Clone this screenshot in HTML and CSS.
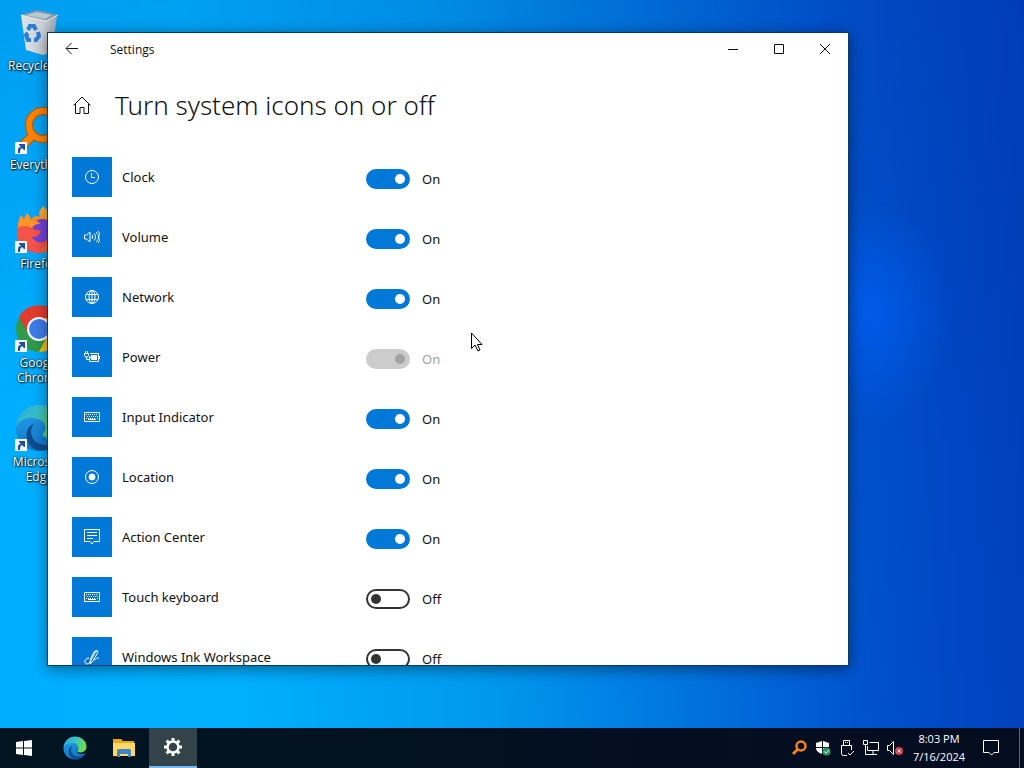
FILE: index.html
```html
<!DOCTYPE html>
<html lang="en">
<head>
  <meta charset="UTF-8">
  <title>Settings</title>
  <link rel="stylesheet" href="styles.css">
</head>
<body>
  <!-- shared symbols -->
  <svg class="defs" aria-hidden="true">
    <defs>
      <linearGradient id="edgeTop" x1="0" y1="0" x2="1" y2="0.4">
        <stop offset="0" stop-color="#2ba8e0"/>
        <stop offset="0.5" stop-color="#36c2c8"/>
        <stop offset="1" stop-color="#6bdc52"/>
      </linearGradient>
      <linearGradient id="edgeLeft" x1="0" y1="0" x2="0.3" y2="1">
        <stop offset="0" stop-color="#1f9be6"/>
        <stop offset="1" stop-color="#1573c6"/>
      </linearGradient>
      <linearGradient id="bin" x1="0" y1="0" x2="1" y2="0">
        <stop offset="0" stop-color="#dfe4e8"/>
        <stop offset="0.6" stop-color="#c9d0d6"/>
        <stop offset="1" stop-color="#9aa7b2"/>
      </linearGradient>
      <linearGradient id="fox" x1="1" y1="0" x2="0" y2="1">
        <stop offset="0" stop-color="#ffe14a"/>
        <stop offset="0.45" stop-color="#ff8a26"/>
        <stop offset="1" stop-color="#f0266b"/>
      </linearGradient>
    </defs>
    <symbol id="edge" viewBox="0 0 48 48">
      <path d="M1 23C3 15 10 11 19 13c9 2 13 7 12 11-2 4-5 6-3 8 3 5 12 5 17 2-4 8-12 13-21 13C11 47 0 37 1 23z" fill="url(#edgeLeft)"/>
      <path d="M1 23C2 10 12 1 24 1c13 0 23 9 23 20 0 8-6 12-13 12-5 0-7-2-5-4 4-5 1-14-10-15C11 13 4 17 1 23z" fill="url(#edgeTop)"/>
      <path d="M20 19c-6 5-5 14 1 19 7 5 17 4 24-3-6 12-19 14-27 9-9-6-9-21 2-25z" fill="#0d4c8e"/>
    </symbol>
    <symbol id="shortcut" viewBox="0 0 12 12">
      <path d="M0 0h12v12H0z" fill="#f5f6f8"/>
      <path d="M3 11V8c0-2 1-3 3-3L4 3V2h6v6H9L7 6C5 7 5 9 5 11z" fill="#1f4fa0"/>
    </symbol>
    <symbol id="keyboard" viewBox="0 0 16 16">
      <path d="M.5 3.500h15v9H.5z" fill="none" stroke="currentColor"/>
      <path d="M2 5.500h12M3 7.500h11M2 9.500h1m1 0h8m1 0h1" fill="none" stroke="currentColor" stroke-dasharray="1 1"/>
      <path d="M4 10.500h8" stroke="currentColor"/>
    </symbol>
  </svg>

  <main class="desktop">
    <ul class="shortcuts">
      <li>
        <svg viewBox="0 0 48 48">
          <path d="M6 7l36 1-5 36-9 3-17-5z" fill="url(#bin)"/>
          <path d="M6 7l16-5 21 5-12 6z" fill="#8297a5"/>
          <path d="M10 7l12-3 15 3-7 4z" fill="#b9c8d0"/>
          <path d="M6 7l25 6 12-6" fill="none" stroke="#e6ebee"/>
          <g fill="none" stroke="#2a7fd4" stroke-width="4">
            <path d="M13 22l2-4h4l2 4"/>
            <path d="M23 24l1 4-3 4h-2"/>
            <path d="M16 32h-3l-2-5 2-2"/>
          </g>
        </svg>
        <span>Recycle Bin</span>
      </li>
      <li>
        <svg viewBox="0 0 48 48">
          <circle cx="28" cy="18" r="14" fill="none" stroke="#b85a00" stroke-width="8"/>
          <path d="M18 28L5 41" stroke="#b85a00" stroke-width="9"/>
          <circle cx="28" cy="18" r="14" fill="none" stroke="#ff8200" stroke-width="6"/>
          <path d="M18 28L5 41" stroke="#ff8200" stroke-width="7"/>
          <use href="#shortcut" x="0" y="35" width="12" height="12"/>
        </svg>
        <span>Everything</span>
      </li>
      <li>
        <svg viewBox="0 0 48 48">
          <path d="M25 11c-2-5 0-8 4-11 1 6 17 10 17 25 0 13-10 22-22 22S2 38 2 26c0-7 2-11 4-15l2 3 4-6 4 5c3-3 6-4 9-2z" fill="url(#fox)"/>
          <circle cx="27" cy="25" r="12" fill="#7442d8"/>
          <path d="M2 25c0-5 2-9 6-11 5-2 11-1 16 4-4 0-7 1-6 4 1 3 5 1 8 3-2 6-7 7-12 5 3 8 13 9 20 2-3 12-14 15-22 11C5 39 1 32 2 25z" fill="#f4534a"/>
          <path d="M3 22c0-5 1-9 3-13l3 4 3-6c2 2 3 4 4 7 4 0 8 1 9 4-5 0-7 2-8 4-4-2-9-3-14 0z" fill="#ff9526"/>
          <use href="#shortcut" x="0" y="35" width="12" height="12"/>
        </svg>
        <span>Firefox</span>
      </li>
      <li>
        <svg viewBox="0 0 48 48">
          <circle cx="24" cy="24" r="23" fill="#2f9b4b"/>
          <path d="M4 12A23 23 0 0 1 44 12L46 16H24L13 28z" fill="#e33b2e"/>
          <path d="M44 13A23 23 0 0 1 24 47L35 26 30 13z" fill="#fbc116"/>
          <circle cx="24" cy="24" r="12" fill="#fff"/>
          <circle cx="24" cy="24" r="10" fill="#3f7de8"/>
          <use href="#shortcut" x="0" y="35" width="12" height="12"/>
        </svg>
        <span>Google Chrome</span>
      </li>
      <li>
        <svg viewBox="0 0 48 48">
          <use href="#edge" width="48" height="48"/>
          <use href="#shortcut" x="0" y="35" width="12" height="12"/>
        </svg>
        <span>Microsoft Edge</span>
      </li>
    </ul>

    <section class="window">
      <header class="titlebar">
        <button class="back" aria-label="Back">
          <svg viewBox="0 0 16 16"><path d="M14 7.500H2.500M7.500 2L2 7.500 7.500 13"/></svg>
        </button>
        <span class="title">Settings</span>
        <button aria-label="Minimize">
          <svg viewBox="0 0 16 16"><path d="M3 8.500h10"/></svg>
        </button>
        <button aria-label="Maximize">
          <svg viewBox="0 0 16 16"><path d="M3.500 3.500h9v9h-9z"/></svg>
        </button>
        <button aria-label="Close">
          <svg viewBox="0 0 16 16"><path d="M3 3l10 10M13 3L3 13"/></svg>
        </button>
      </header>

      <div class="heading">
        <a href="#" aria-label="Home">
          <svg viewBox="0 0 20 20"><path d="M1.500 10.500L10 2l8.500 8.500M3.500 9v9.500H8v-6h4v6h4.500V9"/></svg>
        </a>
        <h1>Turn system icons on or off</h1>
      </div>

      <ul class="settings">
        <li>
          <span class="tile"><svg viewBox="0 0 16 16"><circle cx="8" cy="8" r="6.500"/><path d="M7.500 4v4.500H11"/></svg></span>
          <label for="clock">Clock</label>
          <span class="switch"><input type="checkbox" id="clock" checked><span>On</span></span>
        </li>
        <li>
          <span class="tile"><svg viewBox="0 0 16 16"><path d="M.5 6v4h2L6 13V3L2.500 6zM8 6c1 1 1 3 0 4M10 4.500c2 2 2 5 0 7M12 3c3.500 3 3.500 7 0 10M14 2c3 4 3 8 0 12"/></svg></span>
          <label for="volume">Volume</label>
          <span class="switch"><input type="checkbox" id="volume" checked><span>On</span></span>
        </li>
        <li>
          <span class="tile"><svg viewBox="0 0 16 16"><circle cx="8" cy="8" r="6.500"/><ellipse cx="8" cy="8" rx="3" ry="6.500"/><path d="M8 1.500v13M2 5.500h12M2 10.500h12"/></svg></span>
          <label for="network">Network</label>
          <span class="switch"><input type="checkbox" id="network" checked><span>On</span></span>
        </li>
        <li>
          <span class="tile"><svg viewBox="0 0 16 16"><path d="M1.500 2v2M3.500 2v2M.5 4.500h4v2L3.500 8h-2L.5 6.500zM2.500 8v2.500H5M6 4.500h8.500v8h-9V8M15.500 7v3"/><path d="M7 6h6v5H7V9H5V7.500h2z" fill="currentColor" stroke="none"/></svg></span>
          <label for="power">Power</label>
          <span class="switch"><input type="checkbox" id="power" checked disabled><span>On</span></span>
        </li>
        <li>
          <span class="tile"><svg><use href="#keyboard"/></svg></span>
          <label for="input">Input Indicator</label>
          <span class="switch"><input type="checkbox" id="input" checked><span>On</span></span>
        </li>
        <li>
          <span class="tile"><svg viewBox="0 0 16 16"><circle cx="8" cy="8" r="6.500"/><circle cx="8" cy="8" r="3" fill="currentColor"/></svg></span>
          <label for="location">Location</label>
          <span class="switch"><input type="checkbox" id="location" checked><span>On</span></span>
        </li>
        <li>
          <span class="tile"><svg viewBox="0 0 16 16"><path d="M.5.500h15v12H10l-2 2.500-2-2.500H.5zM3 3.500h10M3 6.500h10M3 9.500h6"/></svg></span>
          <label for="action">Action Center</label>
          <span class="switch"><input type="checkbox" id="action" checked><span>On</span></span>
        </li>
        <li>
          <span class="tile"><svg><use href="#keyboard"/></svg></span>
          <label for="touch">Touch keyboard</label>
          <span class="switch"><input type="checkbox" id="touch"><span>Off</span></span>
        </li>
        <li>
          <span class="tile"><svg viewBox="0 0 16 16"><path d="M6 15l1-4 5-9q2-1 2 1l-5 9zM6 11l4-8q1-2 3-1M5 9c-4 0-6 5-2 6 2 0 3-1 3-3M11 10c-1 2 1 0 2-1s0 1 2 0"/></svg></span>
          <label for="ink">Windows Ink Workspace</label>
          <span class="switch"><input type="checkbox" id="ink"><span>Off</span></span>
        </li>
      </ul>

      <svg class="cursor" viewBox="0 0 12 20"><path d="M.5 1v15.500L4 13l3 6 2-1-2.500-5.500H11z"/></svg>
    </section>
  </main>

  <footer class="taskbar">
    <nav class="apps">
      <button class="start" aria-label="Start">
        <svg viewBox="0 0 16 16" width="16" height="16" fill="#fff"><path d="M0 2l7-1v6.500H0zM8 1l8-1v7.500H8zM0 8.500h7V15l-7-1zM8 8.500h8V16l-8-1z"/></svg>
      </button>
      <button aria-label="Microsoft Edge">
        <svg width="24" height="24"><use href="#edge"/></svg>
      </button>
      <button aria-label="File Explorer">
        <svg viewBox="0 0 24 24" width="24" height="24">
          <path d="M1 3h8l2 2h11v5H1z" fill="#e9a820"/>
          <path d="M1 7h22v13H1z" fill="#ffd966"/>
          <path d="M5 21v-6q0-2 2-2h10q2 0 2 2v6h-3v-3H8v3z" fill="#3f86c8"/>
        </svg>
      </button>
      <button class="active" aria-label="Settings">
        <svg viewBox="0 0 20 20" width="20" height="20" fill="none" stroke="#fff">
          <circle cx="10" cy="10" r="5.500" stroke-width="2.500"/>
          <path d="M10 1v3M10 16v3M1 10h3M16 10h3M3.600 3.600l2.200 2.200M14.200 14.200l2.200 2.200M16.400 3.600l-2.200 2.200M5.800 14.200l-2.200 2.200" stroke-width="3"/>
        </svg>
      </button>
    </nav>

    <div class="tray">
      <button aria-label="Everything">
        <svg viewBox="0 0 16 16"><circle cx="10" cy="6" r="4.500" fill="none" stroke="#f58220" stroke-width="2.500"/><path d="M7 9l-5 5" stroke="#f58220" stroke-width="3"/></svg>
      </button>
      <button aria-label="Windows Security">
        <svg viewBox="0 0 16 16"><path d="M7 1L1 3v4h6zM8 1l6 2v4H8zM1 8h6v6C4 13 1 11 1 8zM8 8h6c0 3-3 5-6 6z" fill="#fff"/><circle cx="11.500" cy="11.500" r="4" fill="#309a67"/><path d="M9.500 11.500l1.500 1.500 3-3" fill="none" stroke="#fff"/></svg>
      </button>
      <button aria-label="Safely remove hardware">
        <svg class="line" viewBox="0 0 16 16"><path d="M4.500 5.500v-5h6v5M6 2.500h1M8 2.500h1M8 15.500H4.500q-2 0-2-2v-8h10V10M9 13l2 2 4-4"/></svg>
      </button>
      <button aria-label="Network">
        <svg class="line" viewBox="0 0 16 16"><path d="M6.500 2.500h9v8h-11V6M6 14.500h8M10 11v3M.5.500h4v4h-4zM2.500 5v9.500H6"/></svg>
      </button>
      <button aria-label="Volume muted">
        <svg class="line" viewBox="0 0 16 16"><path d="M.5 5.500v5h2l4 4V1.500l-4 4z"/><circle cx="12" cy="11" r="4" fill="#d9414e" stroke="none"/><path d="M10.500 9.500l3 3M13.500 9.500l-3 3"/></svg>
      </button>
      <button class="clock"><span>8:03 PM</span><span>7/16/2024</span></button>
      <button class="notify" aria-label="Notifications">
        <svg class="line" viewBox="0 0 16 16"><path d="M.5.500h15v12H11L8.500 15 6 12.500H.5z"/></svg>
      </button>
      <button class="peek" aria-label="Show desktop"></button>
    </div>
  </footer>

  <script>
    // keep the On / Off text next to each switch in step
    document.querySelectorAll(".switch input").forEach(box => {
      box.addEventListener("change", () => {
        box.nextElementSibling.textContent = box.checked ? "On" : "Off";
      });
    });
  </script>
</body>
</html>
```
FILE: styles.css
```css
* {
  box-sizing: border-box;
}

body {
  margin: 0;
  height: 100vh;
  display: flex;
  flex-direction: column;
  overflow: hidden;
  font-family: "Noto Sans", "Open Sans", sans-serif;
  font-size: 13px;
  color: #111;
}

ul {
  list-style: none;
  margin: 0;
  padding: 0;
}

button {
  display: flex;
  align-items: center;
  justify-content: center;
  padding: 0;
  border: none;
  background: none;
  color: inherit;
  font: inherit;
}

.defs {
  position: absolute;
  width: 0;
  height: 0;
}

/* desktop */
.desktop {
  position: relative;
  flex: 1;
  min-height: 0;
  background:
    radial-gradient(ellipse 80px 110px at 85% 43%, rgba(0, 96, 245, 0.7), rgba(0, 80, 220, 0)),
    linear-gradient(to bottom, rgba(0, 60, 160, 0.14), rgba(0, 60, 160, 0) 60%),
    linear-gradient(86deg, #00aeff 0%, #00b0ff 22%, #0098ee 46%, #0070dc 66%, #0050cc 82%, #003cb8 100%);
}

.shortcuts {
  display: grid;
  grid-auto-rows: 99px;
  width: 76px;
  padding-top: 8px;
}

.shortcuts li {
  display: flex;
  flex-direction: column;
  align-items: center;
  gap: 2px;
  padding: 0 8px;
  color: #fff;
  font-family: "Open Sans", sans-serif;
  font-size: 12px;
  line-height: 15px;
  text-align: center;
  text-shadow: 1px 1px 2px #000, 0 0 2px #000;
}

.shortcuts svg {
  flex: none;
  width: 48px;
  height: 48px;
}

.shortcuts span {
  white-space: nowrap;
}

.shortcuts li:nth-child(n+4) span {
  white-space: normal;
}

/* settings window */
.window {
  position: absolute;
  top: 32px;
  right: 175px;
  bottom: 62px;
  left: 47px;
  overflow: hidden;
  background: #fff;
  border: 1px solid #0c3a66;
  box-shadow: 0 3px 14px rgba(0, 0, 0, 0.45);
}

.titlebar {
  display: flex;
  height: 32px;
}

.titlebar button {
  width: 46px;
}

.titlebar .back {
  width: 48px;
}

.titlebar svg {
  width: 16px;
  height: 16px;
}

.titlebar svg,
.heading svg,
.tile svg {
  fill: none;
  stroke: currentColor;
}

.title {
  flex: 1;
  padding-left: 14px;
  font-family: "Open Sans", sans-serif;
  font-size: 12px;
  line-height: 34px;
}

.heading {
  display: flex;
  align-items: center;
  gap: 23px;
  padding: 20px 24px 0;
}

.heading a {
  display: flex;
  color: #111;
}

.heading svg {
  width: 20px;
  height: 20px;
}

h1 {
  margin: 0;
  font-size: 26px;
  font-weight: 300;
  line-height: 40px;
}

.settings {
  display: grid;
  gap: 20px;
  padding: 32px 24px;
}

.settings li {
  display: grid;
  grid-template-columns: 40px 234px auto;
  column-gap: 10px;
  align-items: center;
}

.tile {
  display: flex;
  align-items: center;
  justify-content: center;
  height: 40px;
  background: #0078d7;
  color: #fff;
}

.tile svg {
  width: 16px;
  height: 16px;
}

.switch {
  display: flex;
  align-items: center;
  gap: 12px;
  padding-top: 4px;
}

.switch input {
  appearance: none;
  display: flex;
  align-items: center;
  width: 44px;
  height: 20px;
  margin: 0;
  padding: 0 3px;
  border: 2px solid #333;
  border-radius: 10px;
}

.switch input::before {
  content: "";
  width: 10px;
  height: 10px;
  border-radius: 50%;
  background: #333;
}

.switch input:checked {
  justify-content: flex-end;
  background: #0078d7;
  border-color: #0078d7;
}

.switch input:checked::before {
  background: #fff;
}

.switch input:disabled {
  background: #ccc;
  border-color: #ccc;
}

.switch input:disabled::before {
  background: #a3a3a3;
}

.switch input:disabled + span {
  color: #a0a0a0;
}

.cursor {
  position: absolute;
  top: 299px;
  left: 423px;
  width: 12px;
  height: 20px;
  fill: #fff;
  stroke: #000;
}

/* taskbar */
.taskbar {
  display: flex;
  justify-content: space-between;
  height: 40px;
  background: linear-gradient(to right, #021521, #040c20);
  color: #fff;
}

.apps {
  display: flex;
  gap: 1px;
}

.apps button {
  width: 48px;
}

.apps .start {
  margin-right: 2px;
}

.apps .active {
  background: #34434a;
  border-bottom: 2px solid #76b9ed;
}

.tray {
  display: flex;
}

.tray button {
  width: 24px;
}

.tray svg {
  width: 16px;
  height: 16px;
}

.line {
  fill: none;
  stroke: #fff;
}

.tray .clock {
  flex-direction: column;
  width: 64px;
  font-family: "Open Sans", sans-serif;
  font-size: 11px;
  line-height: 18px;
}

.tray .notify {
  width: 40px;
}

.tray .peek {
  width: 5px;
  margin-left: 8px;
  border-left: 1px solid #5a6478;
}
```
